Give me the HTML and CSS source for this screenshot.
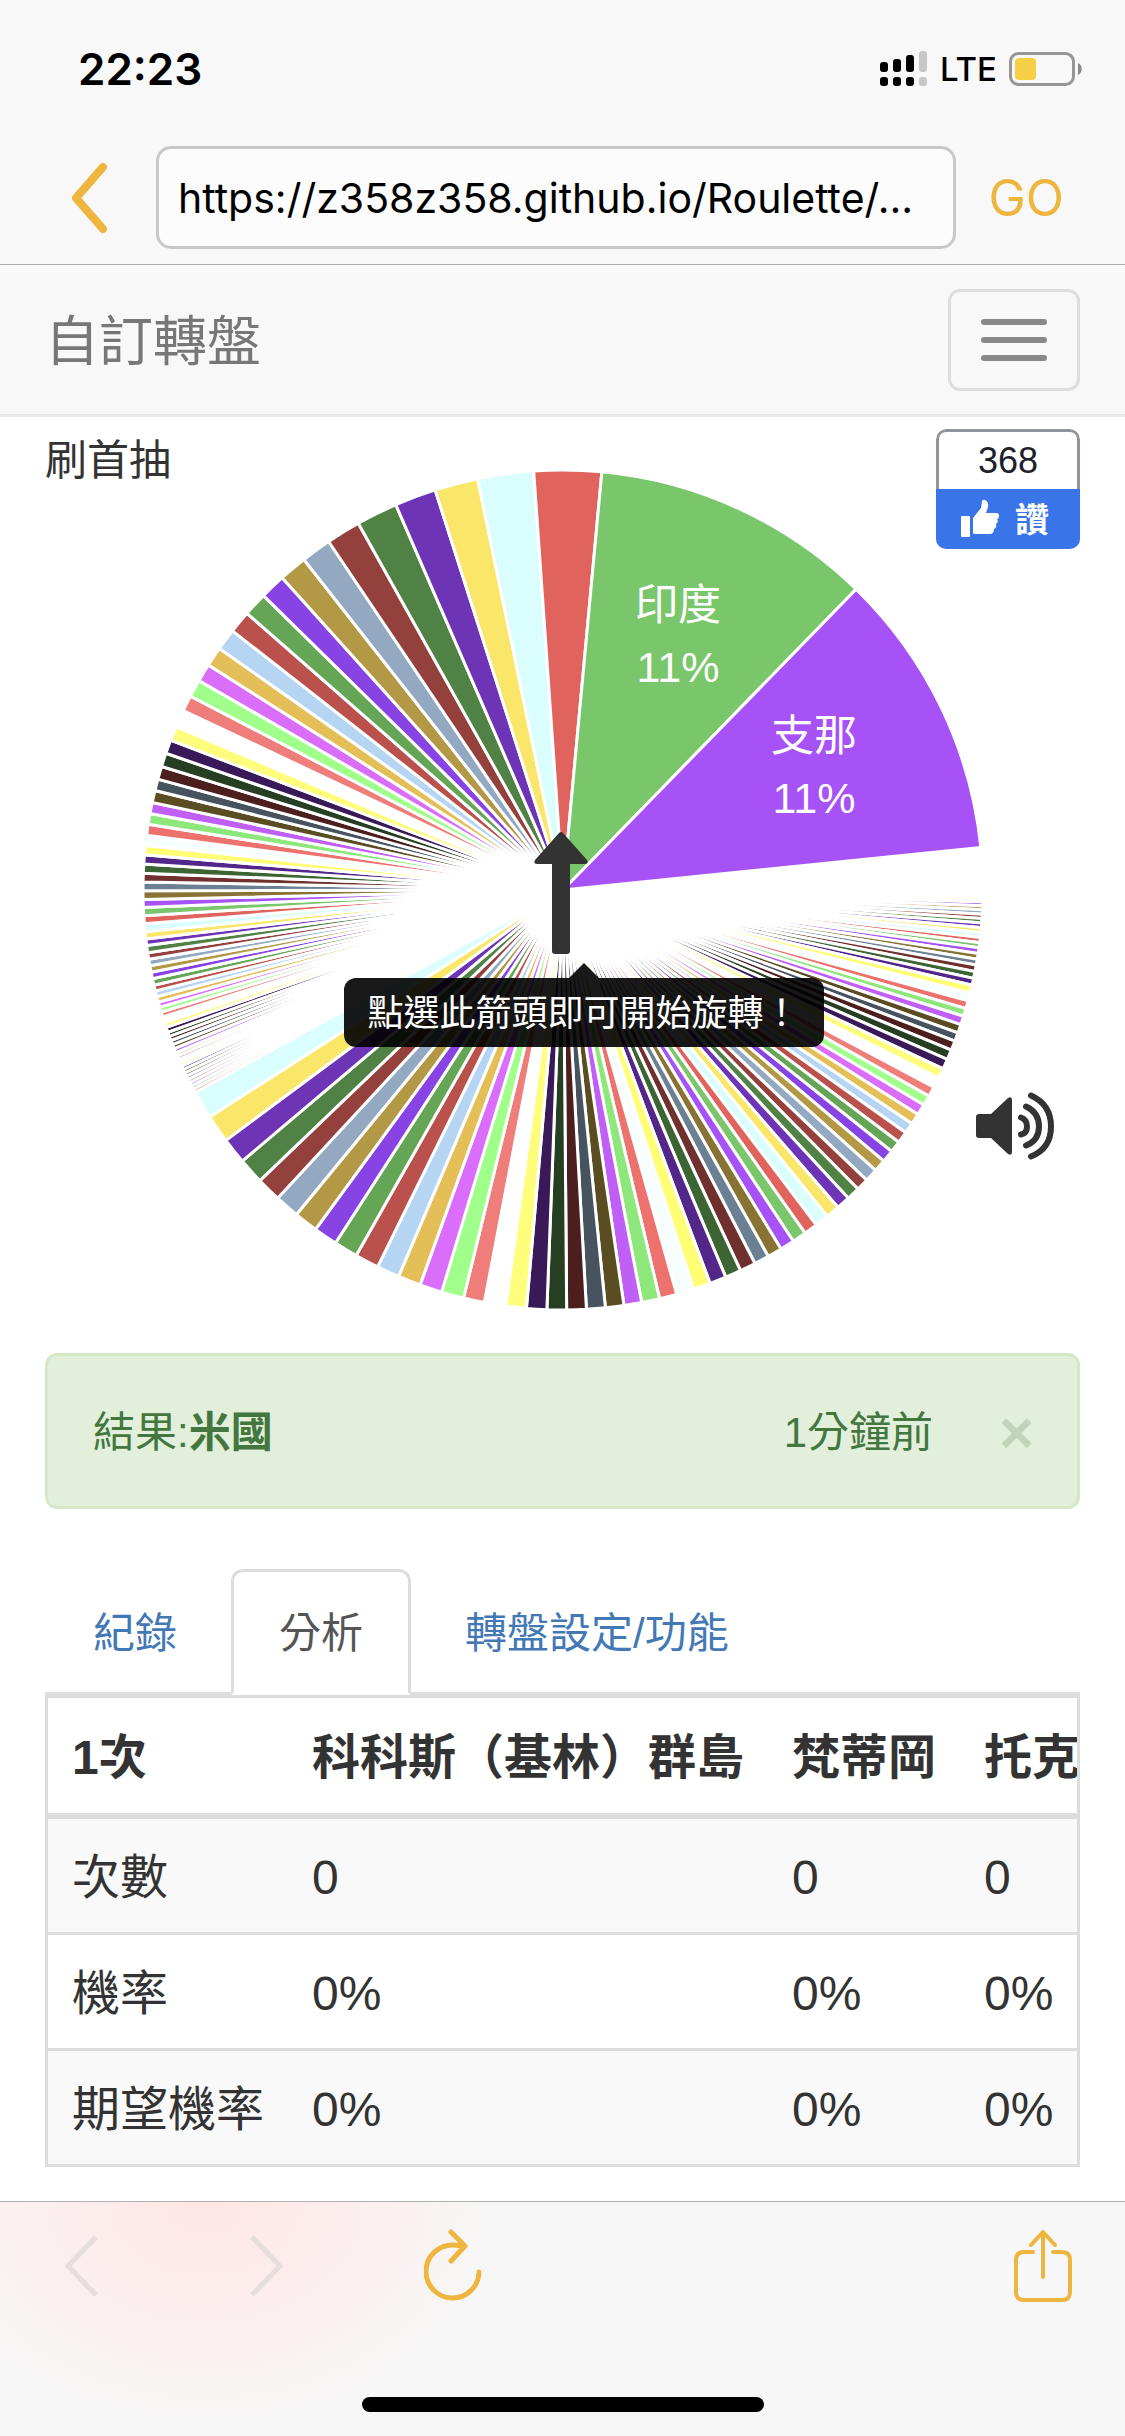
FILE: index.html
```html
<!DOCTYPE html>
<html lang="zh-Hant">
  <head>
    <meta charset="utf-8" />
    <meta name="viewport" content="width=device-width, initial-scale=1" />
    <title>自訂轉盤</title>
    <link rel="stylesheet" href="styles.css">
  </head>
  <body>
    <header class="browser-top">
      <div class="status-bar">
        <span class="clock">22:23</span>
        <div class="status-icons">
          <svg width="48" height="36" viewBox="0 0 48 36">
            <g fill="#000">
              <rect x="0" y="11" width="8" height="10" rx="3" />
              <rect x="13" y="8" width="8" height="13" rx="3" />
              <rect x="26" y="4" width="8" height="17" rx="3" />
              <rect x="0" y="26" width="8" height="9" rx="3" />
              <rect x="13" y="26" width="8" height="9" rx="3" />
              <rect x="26" y="26" width="8" height="9" rx="3" />
            </g>
            <g fill="#c7c7c7">
              <rect x="39" y="0" width="8" height="21" rx="3" />
              <rect x="39" y="26" width="8" height="9" rx="3" />
            </g>
          </svg>
          <span class="network">LTE</span>
          <svg width="74" height="34" viewBox="0 0 74 34">
            <rect x="1.5" y="1.5" width="63" height="31" rx="8" fill="none" stroke="#979797" stroke-width="3" />
            <rect x="6" y="6" width="21" height="22" rx="4" fill="#f7ce46" />
            <path d="M69 11c5 2 5 10 0 12z" fill="#8a8a8a" />
          </svg>
        </div>
      </div>
      <form class="address-bar" onsubmit="return false">
        <button type="button" class="icon-button back" aria-label="返回">
          <svg width="40" height="72" viewBox="0 0 40 72"><path d="M34 5L7 36l27 31" fill="none" stroke="#efb63f" stroke-width="8" stroke-linecap="round" stroke-linejoin="round" /></svg>
        </button>
        <input type="text" class="url" aria-label="網址" value="https://z358z358.github.io/Roulette/..." />
        <button type="submit" class="go">GO</button>
      </form>
    </header>

    <nav class="navbar">
      <a href="#" class="brand">自訂轉盤</a>
      <button type="button" class="toggle" aria-label="選單">
        <span class="bar"></span>
        <span class="bar"></span>
        <span class="bar"></span>
      </button>
    </nav>

    <main class="container">
      <section class="stage">
        <div class="wheel">
          <svg class="pie" viewBox="0 0 840 840">
            <g id="slices"></g>
            <g class="pie-label">
              <text x="535" y="150">印度</text>
              <text x="535" y="212">11%</text>
              <text x="671" y="281">支那</text>
              <text x="671" y="343">11%</text>
            </g>
          </svg>
          <button type="button" class="icon-button spin" aria-label="開始旋轉">
            <svg width="56" height="122" viewBox="0 0 56 122"><path d="M26 1q2-2 4 0l24 27q2 4-2 4H37v87q0 3-3 3H22q-3 0-3-3V32H4q-4 0-2-4z" fill="#333" /></svg>
          </button>
          <div class="tooltip" role="tooltip">點選此箭頭即可開始旋轉！</div>
        </div>
        <p class="wheel-name">刷首抽</p>
        <div class="like">
          <span class="like-count">368</span>
          <button type="button" class="like-button">
            <svg width="38" height="38" viewBox="0 0 38 38" fill="#fff">
              <rect x="0" y="17" width="9" height="21" rx="1" />
              <path d="M12 34V19l8-10 1-7q1-2 3-1 4 2 3 7l-2 6h10q3 0 3 3t-2 3q2 3-1 5 1 4-2 5 0 5-4 5H14q-2 0-2-1z" />
            </svg>
            <span>讚</span>
          </button>
        </div>
        <button type="button" class="icon-button sound" aria-label="音效">
          <svg width="80" height="70" viewBox="0 0 80 70">
            <path d="M3 23h12L32 7q4-2 4 2v52q0 4-4 2L15 47H3q-3 0-3-3V26q0-3 3-3z" fill="#333" />
            <g fill="none" stroke="#333" stroke-width="6" stroke-linecap="round">
              <path d="M45 26.500q6 2 6 9t-6 8" />
              <path d="M50 15.500q13 6 13 20t-13 19" />
              <path d="M55 4.500q20 9 20 31t-20 30" />
            </g>
          </svg>
        </button>
      </section>

      <div class="alert" role="alert">
        <span>結果:<strong>米國</strong></span>
        <span class="alert-time">1分鐘前</span>
        <button type="button" class="close" aria-label="關閉">×</button>
      </div>

      <ul class="tabs">
        <li><a href="#record">紀錄</a></li>
        <li><a href="#analysis" class="active">分析</a></li>
        <li><a href="#setting">轉盤設定/功能</a></li>
      </ul>

      <div class="table-responsive" id="analysis">
        <table>
          <thead>
            <tr><th>1次</th><th>科科斯（基林）群島</th><th>梵蒂岡</th><th>托克勞</th></tr>
          </thead>
          <tbody>
            <tr><td>次數</td><td>0</td><td>0</td><td>0</td></tr>
            <tr><td>機率</td><td>0%</td><td>0%</td><td>0%</td></tr>
            <tr><td>期望機率</td><td>0%</td><td>0%</td><td>0%</td></tr>
          </tbody>
        </table>
      </div>
    </main>

    <footer class="browser-bottom">
      <div class="tools">
        <button type="button" class="icon-button" aria-label="上一頁" disabled>
          <svg width="40" height="72" viewBox="0 0 40 72"><path d="M34 7L6 36l28 29" fill="none" stroke="#e6dedd" stroke-width="5" /></svg>
        </button>
        <button type="button" class="icon-button forward" aria-label="下一頁" disabled>
          <svg width="40" height="72" viewBox="0 0 40 72"><path d="M6 7l28 29L6 65" fill="none" stroke="#e6dedd" stroke-width="5" /></svg>
        </button>
        <button type="button" class="icon-button reload" aria-label="重新整理">
          <svg width="60" height="74" viewBox="0 0 60 74"><path d="M55 43a26.500 26.500 0 1 1-26-27l12 1M27 3l14 14-14 15" fill="none" stroke="#efb63f" stroke-width="5" stroke-linecap="round" stroke-linejoin="round" /></svg>
        </button>
        <button type="button" class="icon-button share" aria-label="分享">
          <svg width="60" height="74" viewBox="0 0 60 74"><path d="M20 23h-9q-8 0-8 8v32q0 8 8 8h38q8 0 8-8V31q0-8-8-8h-9M30 48V3M18 16L30 3l12 13" fill="none" stroke="#efb63f" stroke-width="4" stroke-linecap="round" stroke-linejoin="round" /></svg>
        </button>
      </div>
      <div class="home-bar"></div>
    </footer>

    <script src="wheel.js"></script>
  </body>
</html>
```

FILE: styles.css
```css
* {
  box-sizing: border-box;
}

body {
  margin: 0;
  min-height: 100vh;
  display: flex;
  flex-direction: column;
  background: #fff;
  color: #333;
  font-family: "Liberation Sans", "Noto Sans CJK TC", sans-serif;
  font-size: 42px;
  line-height: 60px;
}

button {
  font-family: inherit;
  cursor: pointer;
}

a {
  color: #4378b6;
  text-decoration: none;
}

.icon-button {
  display: flex;
  padding: 0;
  border: 0;
  background: none;
}

/* browser chrome */
.browser-top {
  height: 265px;
  background: #f8f8f8;
  border-bottom: 1px solid #acacac;
  font-family: Inter, sans-serif;
}

.status-bar {
  display: flex;
  justify-content: space-between;
  align-items: center;
  height: 138px;
  padding: 0 42px 0 78px;
  color: #000;
}

.clock {
  font-size: 44px;
  font-weight: 600;
}

.status-icons {
  display: flex;
  align-items: center;
  gap: 12px;
}

.network {
  font-size: 33px;
  font-weight: 500;
}

.address-bar {
  display: flex;
  align-items: center;
  padding: 8px 45px 0 69px;
}

.url {
  flex: 1;
  min-width: 0;
  height: 103px;
  margin: 0 16px 0 47px;
  padding: 0 19px;
  border: 3px solid #c8c8c8;
  border-radius: 15px;
  background: #fcfcfc;
  color: #000;
  font-family: inherit;
  font-size: 41px;
}

.go {
  padding: 0 16px;
  border: 0;
  background: none;
  color: #efb63f;
  font-size: 50px;
}

.navbar {
  display: flex;
  justify-content: space-between;
  align-items: center;
  height: 152px;
  padding: 0 45px;
  background: #f8f8f8;
  border-bottom: 3px solid #e7e7e7;
}

.brand {
  padding-top: 4px;
  color: #777;
  font-size: 54px;
}

.toggle {
  display: flex;
  flex-direction: column;
  gap: 12px;
  padding: 27px 30px;
  border: 3px solid #ddd;
  border-radius: 12px;
  background: none;
}

.bar {
  width: 66px;
  height: 6px;
  border-radius: 3px;
  background: #888;
}

/* page */
.container {
  flex: 1;
  padding: 0 45px;
}

.stage {
  display: grid;
}

.stage > * {
  grid-area: 1 / 1;
}

.wheel {
  position: relative;
  display: grid;
  place-items: center;
  justify-self: center;
  width: 100%;
  max-width: 840px;
  margin: 53px 0 43px;
}

.wheel > .pie,
.wheel > .spin {
  grid-area: 1 / 1;
}

.pie {
  width: 100%;
}

#slices {
  stroke: #fff;
  stroke-width: 3px;
}

.pie-label {
  fill: #fff;
  font-size: 43px;
  text-anchor: middle;
}

.spin {
  margin: 6px 3px 0 0;
}

.tooltip {
  position: absolute;
  top: 508px;
  left: 50%;
  margin-left: 21px;
  transform: translateX(-50%);
  padding: 6px 24px 3px;
  border-radius: 12px;
  background: rgba(0, 0, 0, 0.9);
  color: #fff;
  font-size: 36px;
  white-space: nowrap;
}

.tooltip::before {
  content: "";
  position: absolute;
  bottom: 100%;
  left: 50%;
  margin-left: -15px;
  border: 15px solid transparent;
  border-top-width: 0;
  border-bottom-color: rgba(0, 0, 0, 0.9);
}

.wheel-name {
  justify-self: start;
  margin: 14px 0 0;
}

.like {
  justify-self: end;
  align-self: start;
  width: 144px;
  margin-top: 12px;
  border-radius: 10px;
  overflow: hidden;
}

.like-count {
  display: block;
  border: 3px solid #90939c;
  border-bottom: 0;
  border-radius: 10px 10px 0 0;
  color: #1d2129;
  font-size: 36px;
  line-height: 57px;
  text-align: center;
}

.like-button {
  display: flex;
  align-items: center;
  justify-content: center;
  gap: 16px;
  width: 100%;
  height: 60px;
  padding: 0 6px 3px 0;
  border: 0;
  background: #3975e8;
  color: #fff;
  font-size: 34px;
  font-weight: bold;
}

.sound {
  place-self: end;
  margin: 0 24px 192px 0;
}

.alert {
  display: flex;
  align-items: center;
  padding: 3px 45px 0;
  height: 156px;
  border: 3px solid #d6e9c6;
  border-radius: 12px;
  background: #e1efdb;
  color: #44763f;
}

.alert-time {
  margin-left: auto;
}

.close {
  width: 33px;
  margin-left: 66px;
  padding: 0;
  border: 0;
  background: none;
  color: #c1d4ba;
  font-size: 60px;
  font-weight: bold;
  line-height: 60px;
}

.tabs {
  display: flex;
  gap: 6px;
  margin: 60px 0 0;
  padding: 0;
  border-bottom: 3px solid #ddd;
  list-style: none;
}

.tabs a {
  display: block;
  margin-bottom: -3px;
  padding: 32px 45px 28px;
  border: 3px solid transparent;
  border-radius: 12px 12px 0 0;
}

.tabs .active {
  border-color: #ddd;
  border-bottom-color: #fff;
  background: #fff;
  color: #555;
}

.table-responsive {
  overflow-x: auto;
  scrollbar-width: none;
  border: 3px solid #ddd;
}

table {
  width: 100%;
  border-collapse: collapse;
  font-size: 48px;
  line-height: 65px;
  white-space: nowrap;
}

th,
td {
  padding: 26px 24px 22px;
  text-align: left;
}

th {
  padding-top: 27px;
  padding-bottom: 23px;
  border-bottom: 6px solid #ddd;
}

td {
  border-top: 3px solid #ddd;
}

tbody tr:nth-child(odd) {
  background: #f9f9f9;
}

/* bottom toolbar */
.browser-bottom {
  display: flex;
  flex-direction: column;
  justify-content: space-between;
  align-items: center;
  height: 235px;
  padding: 27px 0 24px;
  border-top: 1px solid #b0b0b0;
  background: radial-gradient(ellipse 300px 230px at 205px 0, #ffe6e5, #f7f7f7);
}

.tools {
  display: flex;
  align-items: center;
  width: 100%;
  padding: 0 52px 0 62px;
}

.forward {
  margin-left: 144px;
}

.reload {
  margin-left: 138px;
}

.share {
  margin-left: auto;
}

.home-bar {
  width: 402px;
  height: 15px;
  border-radius: 8px;
  background: #000;
}
```

FILE: wheel.js
```js
const colors = [
  "#a652f7", "#79c66b", "#e0645d", "#dafdfe", "#fae668", "#6d35b5", "#4f8244",
  "#94413d", "#92a9c1", "#b39945", "#8743e3", "#64a556", "#ba514c", "#b5d5f3",
  "#e4bf58", "#da6df9", "#a0fe8b", "#ef7e7b", "#ffffff", "#fffd7c", "#391958",
  "#263f22", "#4c1e1e", "#475460", "#5b4d22", "#c05ff6", "#8de77a", "#ed716c",
  "#f7fffe", "#fffe74", "#53268a", "#3c6533", "#6f302e", "#6c8093", "#897334",
];

// slice edges in degrees, counter-clockwise from 12 o'clock
const edges = [
  -84.2, -44.26, -5.31, 4, 11.73, 17.72, 23.46, 29.17, 33.92, 38.1, 41.97,
  45.5, 48.8, 51.9, 54.9, 57.6, 60.1, 62.5, 64.7, 67.1, 69.1, 71, 72.9, 74.7,
  76.3, 77.97, 79.5, 81, 82.5, 83.9, 85.2, 86.45, 87.7, 88.9, 90.1, 91.3, 92.4,
  93.5, 94.6, 95.7, 96.7, 97.6, 98.6, 99.5, 100.4, 101.3, 102.2, 103.1, 103.9,
  104.7, 105.5, 106.2, 106.9, 107.6, 108.4, 109.1, 109.8, 110.4, 111, 111.6,
  112.2, 112.8, 113.3, 113.8, 114.3, 114.8, 115.3, 115.8, 116.3, 116.8, 117.3,
  117.8, 118.3, 118.8, 122.7, 126.6, 130.2, 133.8, 137.2, 140.6, 143.9,
  147.2, 150.5, 153.8, 156.95, 160.1, 163.2, 166.3, 169.2, 172.15, 175, 177.8,
  180.5, 183.2, 185.8, 188.35, 190.8, 193.3, 195.7, 198.1, 200.5, 202.8, 205,
  207.2, 209.26, 211.27, 213.26, 215.2, 217.1, 219, 220.9, 222.8, 224.6, 226.3,
  228.1, 229.8, 231.5, 233.1, 234.7, 236.2, 237.7, 239.2, 240.6, 242, 243.4,
  244.8, 246.2, 247.6, 248.9, 250.1, 251.3, 252.5, 253.6, 254.7, 255.8, 256.9,
  257.85, 258.8, 259.7, 260.5, 261.3, 262.1, 262.8, 263.5, 264.2, 264.85, 265.5,
  266.1, 266.7, 267.3, 267.85, 268.35, 268.8, 269.2, 275.8,
];

const center = 420;
const radius = 420;
const slices = document.getElementById("slices");

function point(deg) {
  const rad = (deg * Math.PI) / 180;
  return [center - radius * Math.sin(rad), center - radius * Math.cos(rad)];
}

for (let i = edges.length - 2; i >= 0; i--) {
  const [x1, y1] = point(edges[i]);
  const [x2, y2] = point(edges[i + 1]);
  const path = document.createElementNS("http://www.w3.org/2000/svg", "path");
  const last = i === edges.length - 2;
  path.setAttribute("fill", last ? "#fff" : colors[i % 35]);
  path.setAttribute(
    "d",
    `M${center} ${center}L${x1} ${y1}A${radius} ${radius} 0 0 0 ${x2} ${y2}Z`
  );
  slices.appendChild(path);
}
```
